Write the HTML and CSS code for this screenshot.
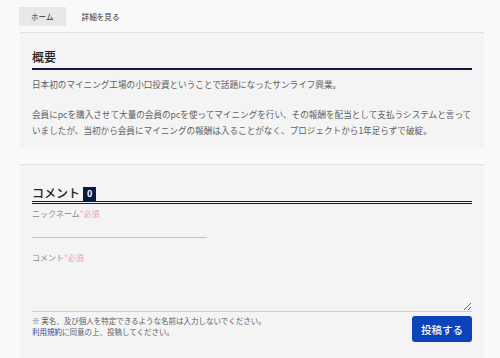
FILE: index.html
```html
<!DOCTYPE html>
<html>
<head>
  <meta charset="utf-8">
  <title>サンライフ興業</title>
  <link rel="stylesheet" href="styles.css">
</head>
<body>
  <div class="tabs">
    <span class="tab active">ホーム</span>
    <span class="tab">詳細を見る</span>
  </div>

  <div class="card">
    <h2 class="title">概要</h2>
    <p class="text">日本初のマイニング工場の小口投資ということで話題になったサンライフ興業。</p>
    <p class="text">会員にpcを購入させて大量の会員のpcを使ってマイニングを行い、その報酬を配当として支払うシステムと言っていましたが、当初から会員にマイニングの報酬は入ることがなく、プロジェクトから1年足らずで破綻。</p>
  </div>

  <div class="card comments">
    <h2 class="title double">コメント<span class="count">0</span></h2>
    <label class="label">ニックネーム<span class="req">*必須</span></label>
    <input type="text" class="name-input">
    <label class="label">コメント<span class="req">*必須</span></label>
    <textarea class="comment-input"></textarea>
    <div class="form-foot">
      <div class="notes">
        <div>※ 実名、及び個人を特定できるような名前は入力しないでください。</div>
        <div><a href="#" class="terms">利用規約</a>に同意の上、投稿してください。</div>
      </div>
      <button class="submit">投稿する</button>
    </div>
  </div>
</body>
</html>
```

FILE: styles.css
```css
body {
  margin: 0;
  background-color: #f9f9f9;
  font-family: "Noto Sans CJK JP", "Noto Sans", sans-serif;
  color: #333;
}

.tabs {
  display: flex;
  gap: 4px;
  padding: 7px 0 0 19px;
  margin-bottom: 6px;
}

.tab {
  display: inline-block;
  height: 19px;
  line-height: 19px;
  padding: 0 12px;
  font-size: 7.6px;
  color: #333;
}

.tab.active {
  background-color: #e8e8e8;
}

.card {
  width: 440px;
  margin-left: 20px;
  padding: 14px 12px 10px;
  background-color: #f4f4f4;
  border-top: 1px solid #e2e2e2;
}

.title {
  margin: 0;
  padding-bottom: 2px;
  font-size: 12px;
  line-height: 19px;
  font-weight: 500;
  color: #222;
  border-bottom: 2px solid #101a3c;
}

.text {
  margin: 6px 0 0;
  font-size: 8.6px;
  line-height: 16px;
  color: #5e5e5e;
}

.text + .text {
  margin-top: 14px;
}

.comments {
  margin-top: 16px;
  padding-top: 20px;
  height: 200px;
}

.title.double {
  line-height: 16px;
  padding-bottom: 0;
  border-bottom: 3px double #101a3c;
}

.count {
  display: inline-block;
  margin-left: 3px;
  padding: 0 4px;
  height: 14px;
  line-height: 14px;
  font-size: 9px;
  font-weight: bold;
  color: #fff;
  background-color: #0b1a45;
  vertical-align: 1px;
}

.label {
  display: block;
  margin-top: 4px;
  font-size: 8px;
  line-height: 12px;
  color: #8a8a8a;
}

.req {
  color: #e8a3b3;
}

.name-input {
  display: block;
  width: 175px;
  height: 15px;
  margin: 2px 0 14px;
  padding: 0;
  border: none;
  border-bottom: 1px solid #c4c4c4;
  background: transparent;
}

.comment-input {
  display: block;
  box-sizing: border-box;
  width: 440px;
  height: 47px;
  margin: 1px 0 0;
  padding: 0;
  border: none;
  border-bottom: 1px solid #cfcfcf;
  background: transparent;
}

.form-foot {
  display: flex;
  justify-content: space-between;
  align-items: flex-start;
  margin-top: 3px;
}

.notes {
  font-size: 7.5px;
  line-height: 11px;
  color: #5e5e5e;
}

.terms {
  color: #2a4a9c;
  text-decoration: none;
}

.submit {
  width: 60px;
  height: 26px;
  margin-top: 1px;
  padding: 0;
  border: none;
  border-radius: 3px;
  background-color: #0b43bb;
  color: #fff;
  font-family: "Noto Sans CJK JP", sans-serif;
  font-size: 10.5px;
  font-weight: 500;
}
```
